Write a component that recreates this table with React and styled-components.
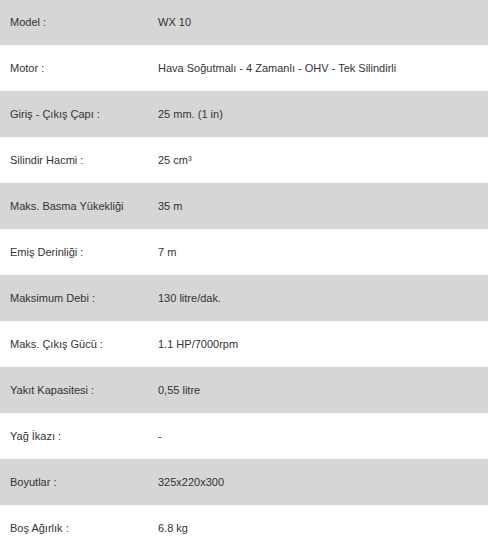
import styled, { createGlobalStyle } from "styled-components";

const GlobalStyle = createGlobalStyle`
  html, body {
    margin: 0;
    padding: 0;
    background: #ffffff;
  }
  body {
    font-family: "Liberation Sans", Arial, sans-serif;
    overflow: hidden;
  }
`;

const SpecTable = styled.div`
  display: flex;
  flex-direction: column;
  width: 488px;
  margin-top: -1px; /* top row is cut slightly in the shot */
`;

const Row = styled.div`
  display: grid;
  grid-template-columns: 148px 1fr;
  align-items: center;
  height: 46px;
  padding-left: 10px;
  box-sizing: border-box;
  background-color: ${({ striped }) => (striped ? "#d6d6d6" : "#ffffff")};
`;

const Cell = styled.span`
  font-size: 11px;
  color: #333333;
  white-space: nowrap;
`;

const specs = [
  ["Model :", "WX 10"],
  ["Motor :", "Hava Soğutmalı - 4 Zamanlı - OHV - Tek Silindirli"],
  ["Giriş - Çıkış Çapı :", "25 mm. (1 in)"],
  ["Silindir Hacmi :", "25 cm³"],
  ["Maks. Basma Yükekliği", "35 m"],
  ["Emiş Derinliği :", "7 m"],
  ["Maksimum Debi :", "130 litre/dak."],
  ["Maks. Çıkış Gücü :", "1.1 HP/7000rpm"],
  ["Yakıt Kapasitesi :", "0,55 litre"],
  ["Yağ İkazı :", "-"],
  ["Boyutlar :", "325x220x300"],
  ["Boş Ağırlık :", "6.8 kg"],
];

const App = () => (
  <>
    <GlobalStyle />
    <SpecTable>
      {specs.map(([label, value], i) => (
        <Row key={label} striped={i % 2 === 0}>
          <Cell>{label}</Cell>
          <Cell>{value}</Cell>
        </Row>
      ))}
    </SpecTable>
  </>
);

export default App;
